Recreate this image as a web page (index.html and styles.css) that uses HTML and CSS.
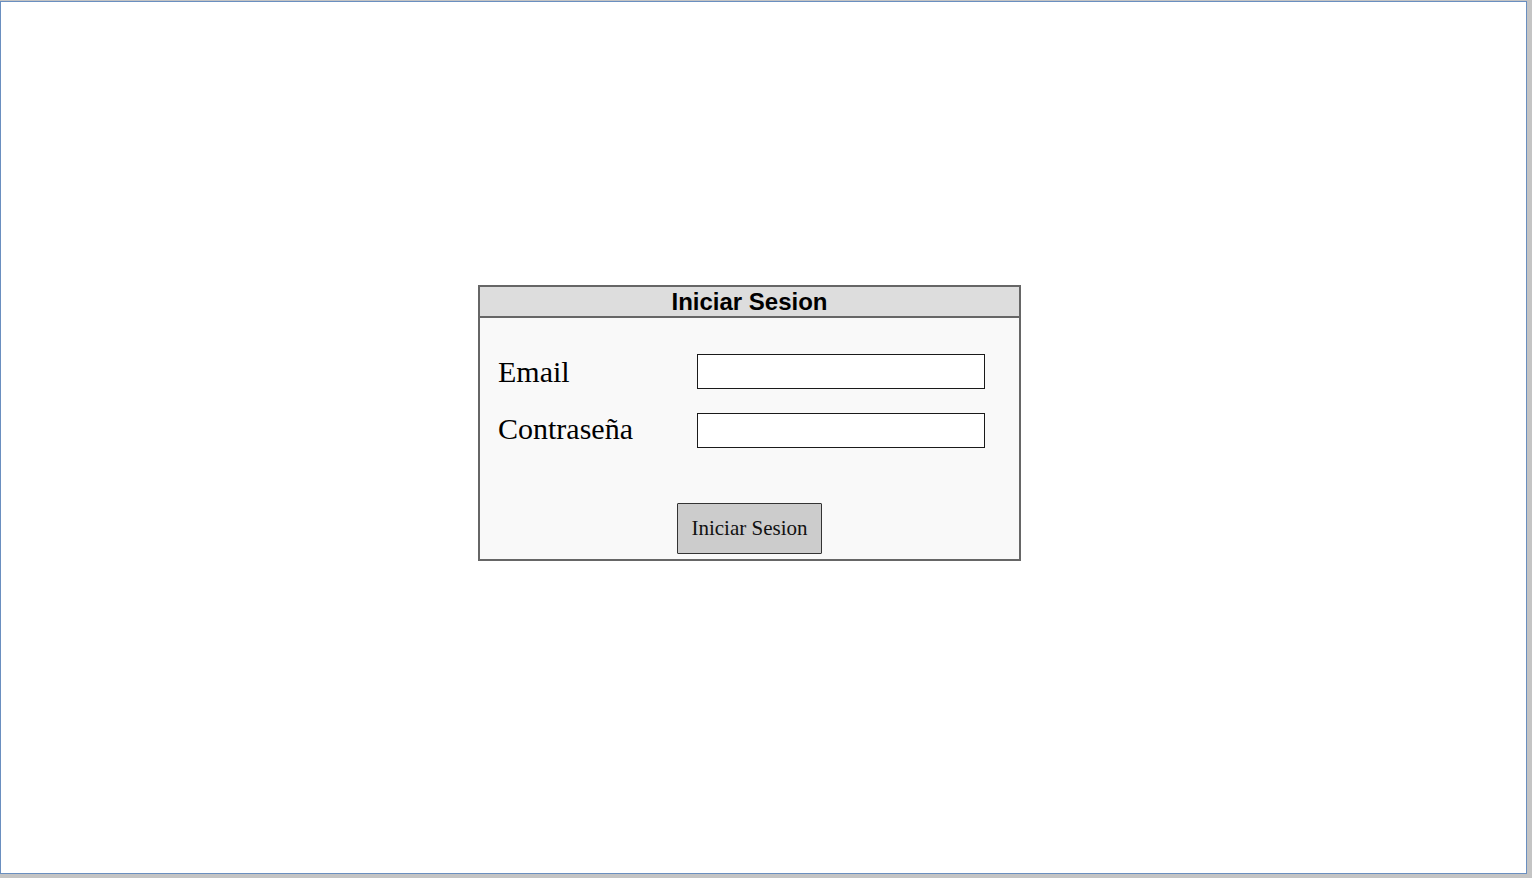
FILE: index.html
```html
<!DOCTYPE html>
<html lang="es">
<head>
<meta charset="utf-8">
<title>Iniciar Sesion</title>
<link rel="stylesheet" href="styles.css">
</head>
<body>
<div class="canvas">
  <div class="dialog">
    <div class="dialog-header">Iniciar Sesion</div>
    <div class="dialog-body">
      <div class="form-grid">
        <label class="field-label" for="email">Email</label>
        <input class="field-input" id="email" type="text">
        <label class="field-label field-label-second" for="pass">Contraseña</label>
        <input class="field-input" id="pass" type="password">
      </div>
      <div class="actions">
        <button class="submit-btn" type="button">Iniciar Sesion</button>
      </div>
    </div>
  </div>
</div>
</body>
</html>
```

FILE: styles.css
```css
html, body {
  margin: 0;
  padding: 0;
}
body {
  background: #c4c4c4;
  width: 1532px;
  height: 878px;
  overflow: hidden;
}
.canvas {
  box-sizing: border-box;
  margin-top: 1px;
  width: 1527px;
  height: 873px;
  background: #ffffff;
  border: 1px solid #6a8fc0;
  padding: 283px 0 0 477px;
}
.dialog {
  box-sizing: border-box;
  width: 543px;
  height: 276px;
  border: 2px solid #666666;
  background: #f9f9f9;
  display: flex;
  flex-direction: column;
}
.dialog-header {
  height: 29px;
  background: #dddddd;
  border-bottom: 2px solid #666666;
  font-family: "Liberation Sans", Arial, sans-serif;
  font-weight: bold;
  font-size: 24px;
  line-height: 30px;
  text-align: center;
  color: #000;
}
.dialog-body {
  flex: 1;
  padding: 36px 0 0 18px;
  display: flex;
  flex-direction: column;
}
.form-grid {
  display: grid;
  grid-template-columns: 199px 288px;
  grid-auto-rows: 35px;
  row-gap: 24px;
}
.field-label {
  font-family: "Liberation Serif", "Times New Roman", serif;
  font-size: 30px;
  line-height: 35px;
  color: #000;
}
.field-label-second {
  margin-top: -2px;
}
.field-input {
  box-sizing: border-box;
  width: 288px;
  height: 35px;
  margin: 0;
  padding: 0 6px;
  border: 1px solid #1a1a1a;
  border-radius: 0;
  background: #ffffff;
  outline: none;
}
.actions {
  display: flex;
  justify-content: center;
  padding: 55px 18px 0 0;
}
.submit-btn {
  box-sizing: border-box;
  width: 145px;
  height: 51px;
  margin: 0;
  padding: 0;
  background: #cccccc;
  border: 1px solid #333333;
  border-radius: 1px;
  font-family: "Liberation Serif", "Times New Roman", serif;
  font-size: 21px;
  color: #111;
}
```
